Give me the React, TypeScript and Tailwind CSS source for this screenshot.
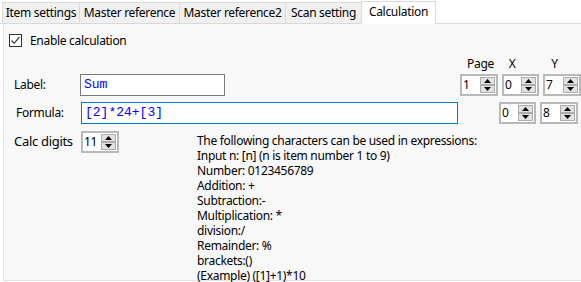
import React from "react";

const font = { fontFamily: '"Segoe UI", "Noto Sans", "Open Sans", sans-serif' };

function Spinner({ value, w = 38 }: { value: string; w?: number }) {
  return (
    <div
      className="flex h-[22px] border-2 border-[#b9b9b9] bg-white"
      style={{ width: w }}
    >
      <div className="flex-1 pl-[1px] text-[12px] leading-[18px] text-black">{value}</div>
      <div className="flex flex-col w-[16px] py-[1px] pr-[1px] gap-0">
        <div className="flex h-[9px] items-center justify-center border border-[#adadad] bg-[#e1e1e1]">
          <svg width="7" height="4" viewBox="0 0 7 4"><polygon points="3.5,0 7,4 0,4" fill="#000" /></svg>
        </div>
        <div className="flex h-[9px] items-center justify-center border border-[#adadad] bg-[#e1e1e1]">
          <svg width="7" height="4" viewBox="0 0 7 4"><polygon points="0,0 7,0 3.5,4" fill="#000" /></svg>
        </div>
      </div>
    </div>
  );
}

const tabs: [string, number][] = [
  ["Item settings", 78],
  ["Master reference", 101],
  ["Master reference2", 107],
  ["Scan setting", 77],
];

const help = [
  "The following characters can be used in expressions:",
  "Input n: [n] (n is item number 1 to 9)",
  "Number: 0123456789",
  "Addition: +",
  "Subtraction:-",
  "Multiplication: *",
  "division:/",
  "Remainder: %",
  "brackets:()",
  "(Example) ([1]+1)*10",
];

export default function App() {
  return (
    <div className="w-[581px] h-[282px] bg-white text-[12px] tracking-[-0.3px] text-black overflow-hidden" style={font}>
      <div className="flex items-end h-[24px] pl-[2px] border-b border-[#d9d9d9]">
        {tabs.map(([t, w]) => (
          <div
            key={t}
            className="h-[21px] leading-[19px] text-center border border-b-0 border-[#d9d9d9] -ml-[1px] first:ml-0 bg-[#f0f0f0] whitespace-nowrap"
            style={{ width: w }}
          >
            {t}
          </div>
        ))}
        <div className="w-[75px] h-[23px] -mb-[1px] text-center leading-[19px] border border-b-0 border-[#d9d9d9] -ml-[1px] bg-white whitespace-nowrap">
          Calculation
        </div>
      </div>
      <div className="ml-[3px] h-[257px] bg-[#f8f8f8] border-l border-b border-[#e3e3e3]">
        <div className="flex items-center gap-[8px] pl-[5px] pt-[10px] h-[23px]">
          <div className="w-[13px] h-[13px] border border-[#333] bg-white flex items-center justify-center">
            <svg width="11" height="11" viewBox="0 0 11 11">
              <polyline points="1.5,5.5 4.2,8.2 9.5,2.2" fill="none" stroke="#333" strokeWidth="1.2" />
            </svg>
          </div>
          <span>Enable calculation</span>
        </div>
        <div className="flex pl-[456px] pt-[11px] h-[25px] leading-[12px]">
          <div className="w-[42px] pl-[7px]">Page</div>
          <div className="w-[42px] pl-[7px]">X</div>
          <div className="w-[38px] pl-[8px]">Y</div>
        </div>
        <div className="flex items-center h-[23px] mt-[1px]">
          <div className="w-[76px] pl-[10px]">Label:</div>
          <div className="w-[145px] h-[22px] border border-[#7a7a7a] bg-white pl-[3px] text-[#0000ff] text-[13px] tracking-normal leading-[20px]" style={{ fontFamily: '"Liberation Mono", "DejaVu Sans Mono", monospace' }}>
            Sum
          </div>
          <div className="flex gap-[4px] ml-[235px]">
            <Spinner value="1" />
            <Spinner value="0" w={37} />
            <Spinner value="7" />
          </div>
        </div>
        <div className="flex items-center h-[23px] mt-[5px]">
          <div className="w-[77px] pl-[12px]">Formula:</div>
          <div className="w-[377px] h-[22px] border border-[#0078d7] bg-white pl-[3px] text-[#0000ff] text-[13px] tracking-normal leading-[20px]" style={{ fontFamily: '"Liberation Mono", "DejaVu Sans Mono", monospace' }}>
            [2]*24+[3]
          </div>
          <div className="flex gap-[4px] ml-[41px]">
            <Spinner value="0" w={37} />
            <Spinner value="8" />
          </div>
        </div>
        <div className="flex mt-[7px]">
          <div className="w-[77px] pl-[10px] text-[13px] leading-[20px]">Calc digits</div>
          <Spinner value="11" w={38} />
          <div className="ml-[78px] mt-[2px] leading-[15px]">
            {help.map((h) => (
              <div key={h}>{h}</div>
            ))}
          </div>
        </div>
      </div>
    </div>
  );
}
